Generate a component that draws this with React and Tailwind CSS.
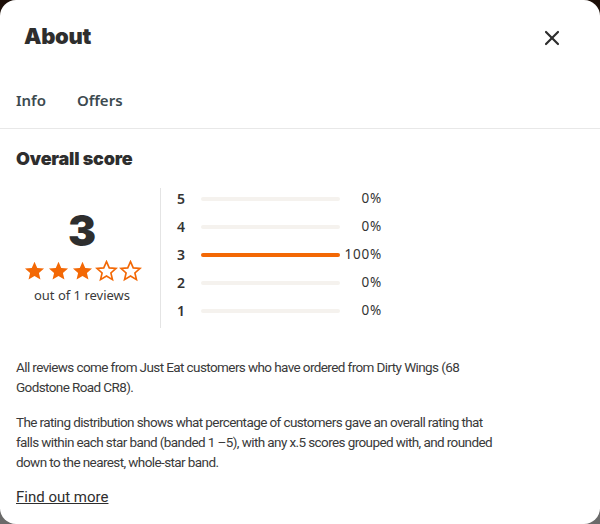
import { X } from 'lucide-react';

const rows = [
  { star: 5, pct: 0 },
  { star: 4, pct: 0 },
  { star: 3, pct: 100 },
  { star: 2, pct: 0 },
  { star: 1, pct: 0 },
];

const Star = ({ filled }) => (
  <svg width="23" height="22" viewBox="0 0 24 24">
    <path
      d="M12 1.8l3 6.8 7.4.6-5.6 4.9 1.7 7.3-6.5-3.9-6.5 3.9 1.7-7.3L1.6 9.2 9 8.6z"
      fill={filled ? '#f36805' : 'none'}
      stroke="#f36805"
      strokeWidth={filled ? 0 : 1.8}
    />
  </svg>
);

const heavy = { fontFamily: 'Inter, sans-serif' };
const body = { fontFamily: 'Roboto, sans-serif' };

export default function App() {
  return (
    <div className="w-[600px] h-[524px] bg-gradient-to-b from-[#1b0e07] to-[#6b6b6b]">
      <div
        className="w-[600px] h-[524px] bg-white rounded-[16px] overflow-hidden text-[#303c3f]"
        style={{ fontFamily: '"Noto Sans", sans-serif' }}
      >
        {/* header */}
        <div className="flex items-center justify-between pl-6 pr-[36px] pt-[19px] h-[53px]">
          <h1 className="text-[22px] font-black text-[#2e2e2e] tracking-[-0.3px]" style={heavy}>
            About
          </h1>
          <X className="w-[24px] h-[24px] mt-[4px] text-[#2e2e2e]" strokeWidth={2.2} />
        </div>

        {/* tabs */}
        <div className="flex gap-[31px] px-4 pt-[36px] pb-[16px] text-[15px] font-semibold text-[#3c4a4f]">
          <span>Info</span>
          <span>Offers</span>
        </div>
        <div className="border-t border-[#e8e8e8]" />

        <div className="px-4">
          <h2 className="mt-[16px] text-[18px] font-black text-[#2e2e2e] tracking-[-0.2px]" style={heavy}>
            Overall score
          </h2>

          {/* score block */}
          <div className="flex mt-[16px]">
            <div className="w-[145px] pr-[12px] flex flex-col items-center justify-center border-r border-[#e4e4e4] h-[140px]">
              <div className="text-[42px] leading-[42px] font-black text-[#2e2e2e]" style={heavy}>
                3
              </div>
              <div className="flex gap-[1px] mt-[8px]">
                <Star filled />
                <Star filled />
                <Star filled />
                <Star />
                <Star />
              </div>
              <div className="text-[13px] mt-[4px] text-[#3a3a3a]">out of 1 reviews</div>
            </div>

            <div className="flex flex-col pl-[16px] pt-[1px] gap-[8px]">
              {rows.map((r) => (
                <div key={r.star} className="flex items-center h-[20px]">
                  <span className="w-[24px] text-[14px] font-semibold text-[#333]">{r.star}</span>
                  <div className="w-[139px] h-[4px] rounded-full bg-[#f5f2ee]">
                    <div
                      className="h-[4px] rounded-full bg-[#f36805]"
                      style={{ width: `${r.pct}%` }}
                    />
                  </div>
                  <span className="w-[42px] text-right text-[13.5px] text-[#333] tracking-[0.8px]">
                    {r.pct}%
                  </span>
                </div>
              ))}
            </div>
          </div>

          {/* text */}
          <div
            className="max-w-[480px] text-[13.5px] leading-[20px] tracking-[-0.6px] text-[#3a3a3a] mt-[29px]"
            style={body}
          >
            <p>
              All reviews come from Just Eat customers who have ordered from Dirty Wings (68 Godstone
              Road CR8).
            </p>
            <p className="mt-[15px]">
              The rating distribution shows what percentage of customers gave an overall rating that
              falls within each star band (banded 1 –5), with any x.5 scores grouped with, and rounded
              down to the nearest, whole-star band.
            </p>
          </div>

          <a href="#" className="block mt-[14px] text-[15px] underline text-[#2e2e2e]" style={body}>
            Find out more
          </a>
        </div>
      </div>
    </div>
  );
}
